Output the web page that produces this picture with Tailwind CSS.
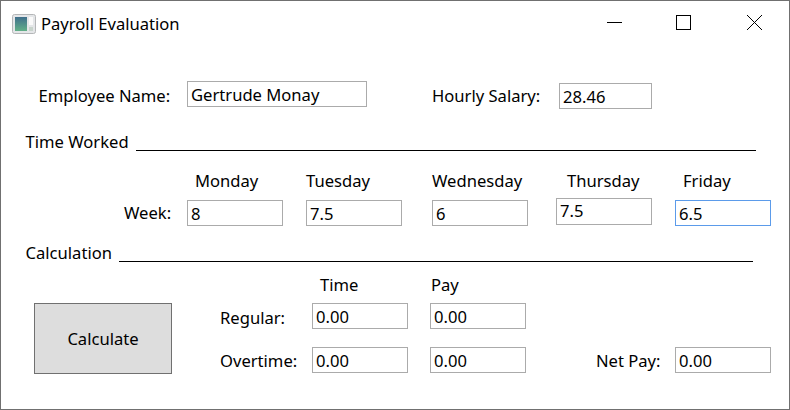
<!DOCTYPE html>
<html>
  <head>
    <meta charset="UTF-8" />
    <title>Payroll Evaluation</title>
    <script src="https://cdn.jsdelivr.net/npm/@tailwindcss/browser@4"></script>
  </head>
  <body class="bg-white">
    <div class="w-[790px] h-[410px] border border-[#707070] bg-white text-[16.6px] leading-[22px] text-black font-['Noto_Sans','Open_Sans',sans-serif] overflow-hidden box-border">
      <!-- title bar -->
      <div class="flex items-center h-[46px] pl-[11px]">
        <svg width="24" height="20" viewBox="0 0 24 20" class="shrink-0">
          <defs>
            <linearGradient id="pane" x1="0" y1="0" x2="0" y2="1">
              <stop offset="0" stop-color="#3f6f8c" />
              <stop offset="1" stop-color="#62b088" />
            </linearGradient>
          </defs>
          <rect x="0.5" y="0.5" width="23" height="19" rx="2" fill="#e4e6e8" stroke="#b4b6b8" />
          <rect x="3" y="3" width="12" height="14" fill="url(#pane)" />
          <rect x="17" y="3" width="4" height="8" fill="#fafafa" />
          <rect x="17" y="13" width="4" height="4" fill="#c8d4cc" />
        </svg>
        <span class="ml-[5px]">Payroll Evaluation</span>
        <div class="ml-auto flex items-center mr-[1px]">
          <svg width="70" height="46" viewBox="0 0 70 46"><path d="M29 21.5h15" stroke="#000" /></svg>
          <svg width="70" height="46" viewBox="0 0 70 46"><rect x="28.5" y="14.5" width="14" height="14" fill="none" stroke="#000" /></svg>
          <svg width="70" height="46" viewBox="0 0 70 46"><path d="M29 14l15 15M44 14L29 29" stroke="#000" fill="none" /></svg>
        </div>
      </div>

      <!-- employee -->
      <div class="flex items-start h-[28px] mt-[34px]">
        <span class="ml-[37.5px] w-[148.5px] mt-[4px]">Employee Name:</span>
        <div class="w-[180px] h-[26px] border border-[#ababab] px-[3px] leading-[26px]">Gertrude Monay</div>
        <span class="ml-[65px] w-[127px] mt-[4px]">Hourly Salary:</span>
        <div class="w-[93px] h-[26px] mt-[2px] border border-[#ababab] px-[3px] leading-[26px]">28.46</div>
      </div>

      <!-- time worked -->
      <div class="flex h-[22px] mt-[22px] ml-[24.5px]">
        <span class="w-[110.5px] whitespace-nowrap">Time Worked</span>
        <div class="w-[620px] h-[20px] border-b border-black"></div>
      </div>
      <div class="flex h-[22px] mt-[17px]">
        <span class="ml-[194px] w-[111px]">Monday</span>
        <span class="w-[126px]">Tuesday</span>
        <span class="w-[135px]">Wednesday</span>
        <span class="w-[116px]">Thursday</span>
        <span>Friday</span>
      </div>
      <div class="flex items-start h-[28px] mt-[7px]">
        <span class="ml-[123px] w-[63px] mt-[3px]">Week:</span>
        <div class="w-[96px] h-[26px] mt-[1px] border border-[#ababab] px-[3px] leading-[26px]">8</div>
        <div class="ml-[23px] w-[96px] h-[26px] mt-[1px] border border-[#ababab] px-[3px] leading-[26px]">7.5</div>
        <div class="ml-[30px] w-[96px] h-[26px] mt-[1px] border border-[#ababab] px-[3px] leading-[26px]">6</div>
        <div class="ml-[28px] w-[96px] h-[27px] -mt-[1px] border border-[#ababab] px-[3px] leading-[24px]">7.5</div>
        <div class="ml-[23px] w-[96px] h-[26px] mt-[1px] border border-[#5b9bea] px-[3px] leading-[26px]">6.5</div>
      </div>

      <!-- calculation -->
      <div class="flex h-[22px] mt-[15px] ml-[24.5px]">
        <span class="w-[93.5px] whitespace-nowrap">Calculation</span>
        <div class="w-[634px] h-[20px] border-b border-black"></div>
      </div>
      <div class="flex h-[22px] mt-[10px]">
        <span class="ml-[319px] w-[111px]">Time</span>
        <span>Pay</span>
      </div>
      <div class="flex mt-[7px] ml-[33px]">
        <button class="w-[138px] h-[71px] border border-[#707070] bg-[#dddddd]">Calculate</button>
        <div class="ml-[48px] flex flex-col gap-[18px]">
          <div class="flex items-start h-[26px]">
            <span class="w-[92px] mt-[4px]">Regular:</span>
            <div class="w-[96px] h-[26px] border border-[#ababab] px-[3px] leading-[26px]">0.00</div>
            <div class="ml-[22px] w-[96px] h-[26px] border border-[#ababab] px-[3px] leading-[26px]">0.00</div>
          </div>
          <div class="flex items-start h-[26px]">
            <span class="w-[92px] mt-[3px]">Overtime:</span>
            <div class="w-[96px] h-[26px] border border-[#ababab] px-[3px] leading-[26px]">0.00</div>
            <div class="ml-[22px] w-[96px] h-[26px] border border-[#ababab] px-[3px] leading-[26px]">0.00</div>
            <span class="ml-[70px] w-[79px] mt-[3px]">Net Pay:</span>
            <div class="w-[96px] h-[26px] border border-[#ababab] px-[3px] leading-[26px]">0.00</div>
          </div>
        </div>
      </div>
    </div>
  </body>
</html>
